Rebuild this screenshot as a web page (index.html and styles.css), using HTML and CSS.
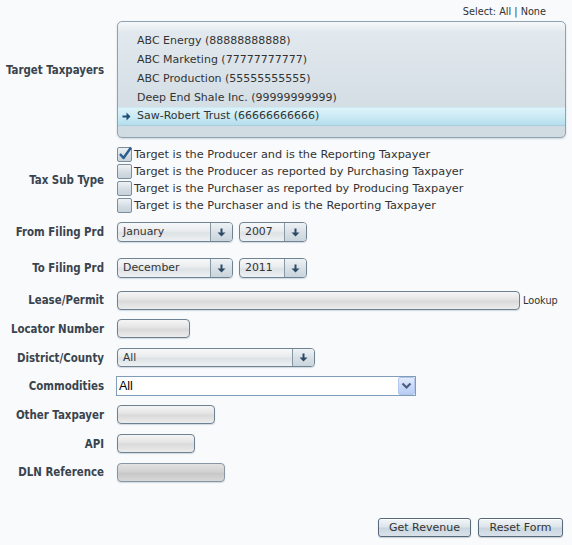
FILE: index.html
```html
<!DOCTYPE html>
<html>
<head>
<meta charset="utf-8">
<link rel="stylesheet" href="styles.css">
</head>
<body>
<div class="page">
  <div class="select-links">Select: <a class="lnk">All</a> | <a class="lnk">None</a></div>

  <div class="row row-list">
    <div class="lbl lbl-top">Target Taxpayers</div>
    <div class="listbox">
      <div class="item">ABC Energy (88888888888)</div>
      <div class="item">ABC Marketing (77777777777)</div>
      <div class="item">ABC Production (55555555555)</div>
      <div class="item">Deep End Shale Inc. (99999999999)</div>
      <div class="item selected"><svg class="sel-arrow" width="9" height="9" viewBox="0 0 9 9"><rect x="0.5" y="3.5" width="4.5" height="2" fill="#1f4d78"/><path d="M4.5 0.5v8L8.5 4.5z" fill="#1f4d78"/></svg>Saw-Robert Trust (66666666666)</div>
    </div>
  </div>

  <div class="row row-checks">
    <div class="lbl">Tax Sub Type</div>
    <div class="checks">
      <div class="check"><span class="box"><svg width="16" height="16" viewBox="0 0 16 16"><path d="M3 8L6.5 12L14 1.5" fill="none" stroke="#2a5c8d" stroke-width="2.4" stroke-linejoin="round"/></svg></span>Target is the Producer and is the Reporting Taxpayer</div>
      <div class="check"><span class="box"></span>Target is the Producer as reported by Purchasing Taxpayer</div>
      <div class="check"><span class="box"></span>Target is the Purchaser as reported by Producing Taxpayer</div>
      <div class="check"><span class="box"></span>Target is the Purchaser and is the Reporting Taxpayer</div>
    </div>
  </div>

  <div class="row row-period">
    <div class="lbl">From Filing Prd</div>
    <div class="dd dd-month"><span class="dd-text">January</span><span class="dd-btn"><svg width="9" height="9" viewBox="0 0 9 9"><rect x="3.5" y="0.5" width="2" height="4.5" fill="#2f4a66"/><path d="M0.5 4.5h8L4.5 8.5z" fill="#2f4a66"/></svg></span></div>
    <div class="dd dd-year"><span class="dd-text">2007</span><span class="dd-btn"><svg width="9" height="9" viewBox="0 0 9 9"><rect x="3.5" y="0.5" width="2" height="4.5" fill="#2f4a66"/><path d="M0.5 4.5h8L4.5 8.5z" fill="#2f4a66"/></svg></span></div>
  </div>

  <div class="row row-period">
    <div class="lbl">To Filing Prd</div>
    <div class="dd dd-month"><span class="dd-text">December</span><span class="dd-btn"><svg width="9" height="9" viewBox="0 0 9 9"><rect x="3.5" y="0.5" width="2" height="4.5" fill="#2f4a66"/><path d="M0.5 4.5h8L4.5 8.5z" fill="#2f4a66"/></svg></span></div>
    <div class="dd dd-year"><span class="dd-text">2011</span><span class="dd-btn"><svg width="9" height="9" viewBox="0 0 9 9"><rect x="3.5" y="0.5" width="2" height="4.5" fill="#2f4a66"/><path d="M0.5 4.5h8L4.5 8.5z" fill="#2f4a66"/></svg></span></div>
  </div>

  <div class="row row-field">
    <div class="lbl">Lease/Permit</div>
    <input class="field f-lease" type="text">
    <span class="lookup">Lookup</span>
  </div>

  <div class="row row-field">
    <div class="lbl">Locator Number</div>
    <input class="field f-locator" type="text">
  </div>

  <div class="row row-field">
    <div class="lbl">District/County</div>
    <div class="dd dd-district"><span class="dd-text">All</span><span class="dd-btn"><svg width="9" height="9" viewBox="0 0 9 9"><rect x="3.5" y="0.5" width="2" height="4.5" fill="#2f4a66"/><path d="M0.5 4.5h8L4.5 8.5z" fill="#2f4a66"/></svg></span></div>
  </div>

  <div class="row row-field">
    <div class="lbl">Commodities</div>
    <div class="native-select"><span class="ns-text">All</span><span class="ns-btn"><svg width="11" height="8" viewBox="0 0 11 8"><path d="M1.5 1.5L5.5 5.5L9.5 1.5" fill="none" stroke="#4a5e80" stroke-width="2.2"/></svg></span></div>
  </div>

  <div class="row row-field">
    <div class="lbl">Other Taxpayer</div>
    <input class="field f-other" type="text">
  </div>

  <div class="row row-field">
    <div class="lbl">API</div>
    <input class="field f-api" type="text">
  </div>

  <div class="row row-field">
    <div class="lbl">DLN Reference</div>
    <input class="field f-dln disabled" type="text">
  </div>

  <div class="actions">
    <button class="btn btn-get">Get Revenue</button>
    <button class="btn btn-reset">Reset Form</button>
  </div>
</div>
</body>
</html>
```

FILE: styles.css
```css
html, body {
  margin: 0;
  padding: 0;
  background: #f8fafc;
}
body {
  font-family: "DejaVu Sans", Verdana, sans-serif;
  color: #333;
}
.page {
  width: 572px;
  height: 545px;
  box-sizing: border-box;
  display: flex;
  flex-direction: column;
}
.select-links {
  height: 21px;
  box-sizing: border-box;
  padding: 5px 26px 0 0;
  text-align: right;
  font-family: "DejaVu Sans Condensed", "DejaVu Sans", sans-serif;
  font-size: 10.8px;
  line-height: 14px;
  color: #333;
}
.lnk {
  color: #333;
}
.row {
  display: flex;
  align-items: center;
  gap: 13px;
}
.lbl {
  width: 104px;
  flex: none;
  text-align: right;
  font-family: "DejaVu Sans Condensed", "DejaVu Sans", sans-serif;
  font-weight: bold;
  font-size: 11.4px;
  line-height: 14px;
  color: #3a444e;
  white-space: nowrap;
}
.lbl-top {
  align-self: flex-start;
  margin-top: 42px;
}
.row-list {
  height: 117px;
  align-items: flex-start;
}
.listbox {
  width: 449px;
  height: 117px;
  box-sizing: border-box;
  border: 1px solid #8ea2b1;
  border-radius: 5px;
  padding-top: 9px;
  background: linear-gradient(to bottom, #f6f8fa 0px, #e2e9ee 10px, #d6e0e6 60%, #cfdae1 100%);
  box-shadow: 0 1px 2px rgba(120, 140, 160, 0.35);
  overflow: hidden;
}
.item {
  position: relative;
  height: 19px;
  line-height: 19px;
  padding-left: 19px;
  font-size: 11px;
  color: #333;
  white-space: nowrap;
}
.item.selected {
  background: linear-gradient(to bottom, #bfe3ef 0px, #dcf3fa 1px, #cdebf5 50%, #b4deec 100%);
  border-bottom: 1px solid #a9cfdd;
  height: 18px;
  line-height: 18px;
}
.sel-arrow {
  position: absolute;
  left: 4px;
  top: 5px;
}
.row-checks {
  margin-top: 8px;
  height: 68px;
}
.checks {
  display: flex;
  flex-direction: column;
}
.check {
  display: flex;
  align-items: center;
  height: 17px;
  font-size: 11.3px;
  color: #333;
  white-space: nowrap;
}
.box {
  width: 15px;
  height: 15px;
  box-sizing: border-box;
  margin-right: 2px;
  border: 1px solid #7c8e9c;
  border-radius: 2px;
  background: linear-gradient(to bottom, #eef2f5, #d2dbe2 60%, #c7d2da);
  position: relative;
  flex: none;
}
.box svg {
  position: absolute;
  left: -1px;
  top: -2px;
}
.row-period {
  height: 36px;
}
.row-field {
  height: 28.67px;
}
.dd {
  display: flex;
  height: 20px;
  box-sizing: border-box;
  border: 1px solid #6f8393;
  border-radius: 4px;
  background: linear-gradient(to bottom, #f7f8f9 0%, #e9ecee 45%, #dde2e5 55%, #eef1f3 100%);
  box-shadow: 0 1px 1px rgba(100, 120, 140, 0.25);
  overflow: hidden;
}
.dd-month { width: 116px; }
.dd-year { width: 68px; margin-left: -7px; }
.dd-district { width: 198px; height: 19px; }
.dd-text {
  flex: 1;
  padding-left: 5px;
  font-size: 10.9px;
  line-height: 18px;
  color: #333;
}
.dd-district .dd-text { line-height: 17px; font-size: 10.6px; }
.dd-btn {
  width: 21px;
  flex: none;
  border-left: 1px solid #8797a4;
  display: flex;
  align-items: center;
  justify-content: center;
  background: linear-gradient(to bottom, #eef2f5 0%, #d9e1e7 50%, #c9d4dc 100%);
}
.field {
  margin: 0;
  padding: 0;
  height: 19px;
  box-sizing: border-box;
  border: 1px solid #6d8192;
  border-radius: 4px;
  background: linear-gradient(to bottom, #f5f5f5 0%, #e6e6e6 40%, #dadada 55%, #ececec 100%);
  box-shadow: 0 1px 1px rgba(100, 120, 140, 0.25);
  outline: none;
}
.f-lease { width: 403px; }
.f-locator { width: 73px; }
.f-other { width: 98px; }
.f-api { width: 78px; height: 18.5px; }
.f-dln { width: 108px; }
.field.disabled {
  border-color: #8796a2;
  background: linear-gradient(to bottom, #e2e2e2 0%, #d2d2d2 45%, #c8c8c8 55%, #d8d8d8 100%);
}
.lookup {
  margin-left: -10px;
  font-family: "DejaVu Sans Condensed", "DejaVu Sans", sans-serif;
  font-size: 10.8px;
  color: #333;
}
.native-select {
  margin-left: -1px;
  width: 300px;
  height: 20px;
  box-sizing: border-box;
  border: 1px solid #7f9db9;
  background: #fff;
  display: flex;
  align-items: stretch;
}
.ns-text {
  flex: 1;
  padding-left: 2px;
  font-family: "Liberation Sans", Arial, sans-serif;
  font-size: 12.5px;
  line-height: 18px;
  color: #000;
}
.ns-btn {
  width: 17px;
  margin: 0;
  box-sizing: border-box;
  border: 1px solid #b3c7ee;
  border-radius: 2px;
  background: linear-gradient(to bottom, #e3ecfd 0%, #cbdaf8 50%, #b8cdf5 100%);
  display: flex;
  align-items: center;
  justify-content: center;
}
.actions {
  display: flex;
  justify-content: flex-end;
  gap: 7px;
  padding-right: 9px;
  margin-top: 31px;
}
.btn {
  height: 19px;
  margin: 0;
  padding: 0;
  box-sizing: border-box;
  border: 1px solid #56687a;
  border-radius: 3px;
  background: linear-gradient(to bottom, #f2f5f8 0%, #dde5eb 45%, #cad6df 55%, #d9e2e9 100%);
  box-shadow: inset 0 1px 0 #fff, 0 1px 1px rgba(80, 100, 120, 0.3);
  font-family: "DejaVu Sans", Verdana, sans-serif;
  font-size: 11px;
  color: #333;
  line-height: 17px;
}
.btn-get { width: 93px; }
.btn-reset { width: 85px; }
```
